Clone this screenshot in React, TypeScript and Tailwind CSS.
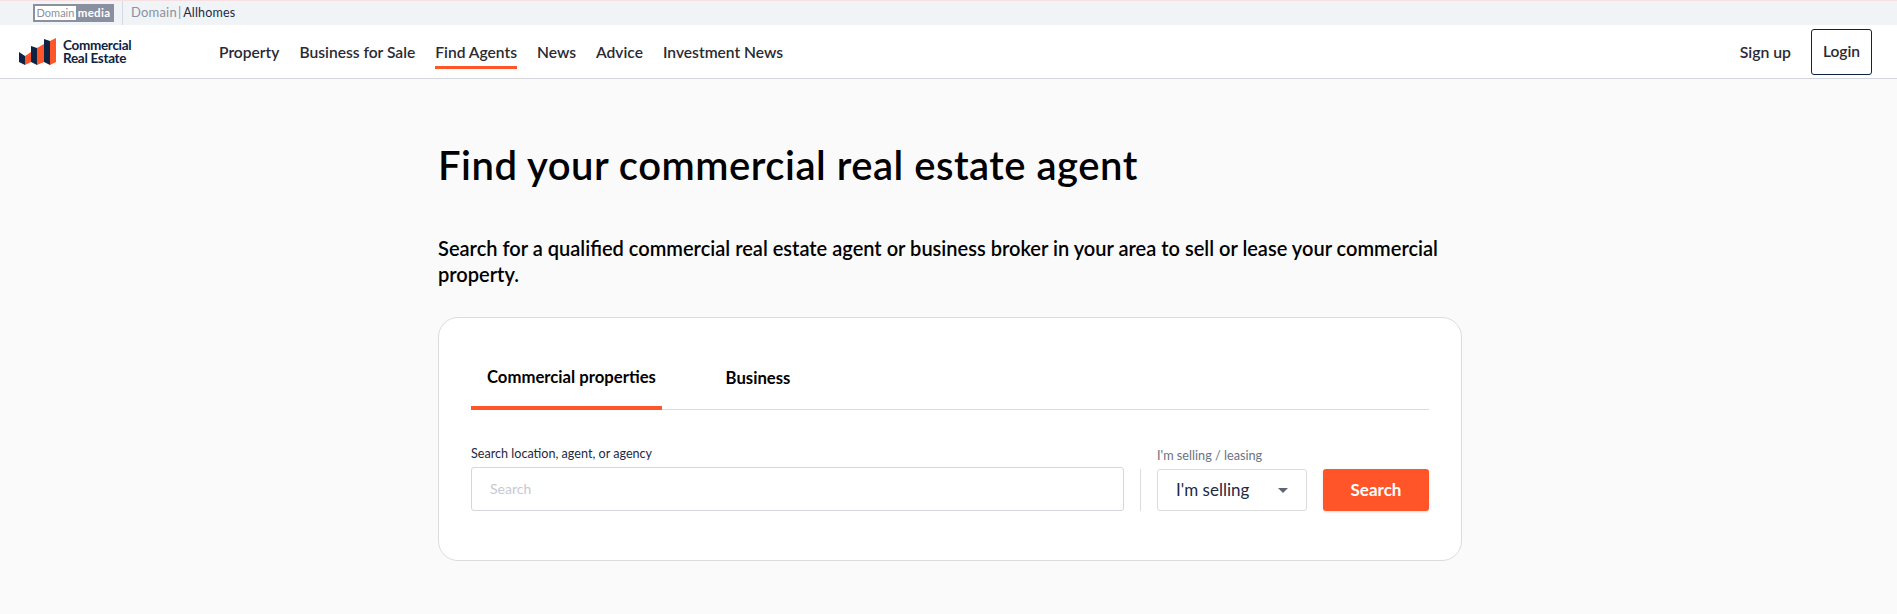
const navItems = ['Property', 'Business for Sale', 'Find Agents', 'News', 'Advice', 'Investment News'];

function Logo() {
  return (
    <svg width="38" height="28" viewBox="0 0 38 28" aria-hidden className="block shrink-0">
      <path d="M0 14l6 4v9l-6-3z" fill="#0e2244" />
      <path d="M6 18l6-4v10l-6 3z" fill="#ff5528" />
      <path d="M12 8l6 2v17l-6-3z" fill="#0e2244" />
      <path d="M18 10l7-4v18l-7 3z" fill="#ff5528" />
      <path d="M25 1l6 2v24l-6-3z" fill="#0e2244" />
      <path d="M31 3l6-3v24l-6 3z" fill="#ff5528" />
    </svg>
  );
}

export default function App() {
  return (
    <div className="min-h-[614px] bg-[#fafafa] font-['Lato',sans-serif] text-[#0b1b33]">
      <div className="flex h-[25px] items-center border-t border-[#f7dfe2] bg-[#f1f4f7] pl-[33px]">
        <div className="flex h-[18px] w-[81px] items-center border-2 border-[#8a90a0] bg-[#8a90a0] text-[11px]">
          <span className="flex h-full w-[41px] items-center justify-center bg-white text-[#8a90a0]">Domain</span>
          <span className="flex-1 text-center text-[11.5px] font-bold tracking-[0.3px] text-white">media</span>
        </div>
        <div className="ml-2 h-full w-px bg-[#d5d9e0]" />
        <span className="ml-2 text-[13px] tracking-[0.2px] text-[#8a90a0]">Domain</span>
        <span className="mr-[2px] ml-[1px] text-[13px] text-[#8a90a0]">|</span>
        <span className="text-[12.5px] tracking-[0.2px] text-[#1c2a44]">Allhomes</span>
      </div>

      <header className="flex h-[54px] items-center border-b border-[#d3d6dd] bg-white pl-[19px] pr-[25px]">
        <div className="flex w-[200px] items-center gap-[6px]">
          <Logo />
          <div className="text-[13.5px] leading-[13px] font-bold tracking-[-0.3px] text-[#0e2244]">
            <div>Commercial</div>
            <div>Real Estate</div>
          </div>
        </div>
        <nav className="flex items-center gap-5">
          {navItems.map((item) => (
            <a
              key={item}
              className={
                item === 'Find Agents'
                  ? 'flex h-[34px] items-center border-b-[3px] border-[#ff5528] pt-[5px] text-[15.6px] font-semibold text-[#2a2a33]'
                  : 'flex h-[34px] items-center border-b-[3px] border-transparent pt-[5px] text-[15.6px] font-semibold text-[#2a2a33]'
              }
            >
              {item}
            </a>
          ))}
        </nav>
        <div className="ml-auto flex items-center gap-5">
          <a className="text-[15.8px] font-semibold text-[#2a2a33]">Sign up</a>
          <button className="flex h-[46px] w-[61px] items-center justify-center rounded-[3px] border border-[#0e2244] pt-[1px] text-[15.6px] font-semibold text-[#2a2a33]">
            Login
          </button>
        </div>
      </header>

      <main className="ml-[438px] w-[1024px] pt-[61px]">
        <h1 className="text-[40px] leading-[50px] font-semibold tracking-[0.5px] text-black">Find your commercial real estate agent</h1>
        <p className="mt-[45px] text-[20.05px] leading-[26px] font-semibold text-black">
          Search for a qualified commercial real estate agent or business broker in your area to sell or lease your commercial property.
        </p>

        <section className="mt-[30px] h-[244px] rounded-[20px] border border-[#dcdcdc] bg-white px-8 pt-[32px]">
          <div className="flex h-[60px] border-b border-[#dcdcdc]">
            <button className="-mb-px h-[60px] w-[191px] border-b-4 border-[#ff5528] pl-4 text-left text-[16.7px] font-bold text-black">
              Commercial properties
            </button>
            <button className="ml-[33px] h-[60px] w-[126px] pb-[3px] text-[16.7px] font-bold text-black">Business</button>
          </div>

          <div className="mt-[36px] flex items-end">
            <label className="block w-[653px]">
              <span className="block text-[12.6px] leading-4 text-[#1c2a44]">Search location, agent, or agency</span>
              <div className="mt-[5px] flex h-[44px] items-center rounded-[3px] border border-[#d3d6dd] px-[18px] text-sm text-[#c6c9d1]">
                Search
              </div>
            </label>
            <div className="mx-4 h-[42px] w-px bg-[#dcdcdc]" />
            <div className="w-[150px]">
              <span className="block text-[12.7px] leading-4 text-[#6b7280]">I'm selling / leasing</span>
              <div className="mt-[6px] flex h-[42px] items-center justify-between rounded-[3px] border border-[#dcdcdc] pr-[18px] pl-[18px] text-[17px] text-[#1c2a44]">
                I'm selling
                <span className="h-0 w-0 border-x-[5px] border-t-[5px] border-x-transparent border-t-[#5f6571]" />
              </div>
            </div>
            <button className="ml-4 flex h-[42px] w-[106px] items-center justify-center rounded-[3px] bg-[#ff5528] text-[17px] font-bold text-white shadow-sm">
              Search
            </button>
          </div>
        </section>
      </main>
    </div>
  );
}
